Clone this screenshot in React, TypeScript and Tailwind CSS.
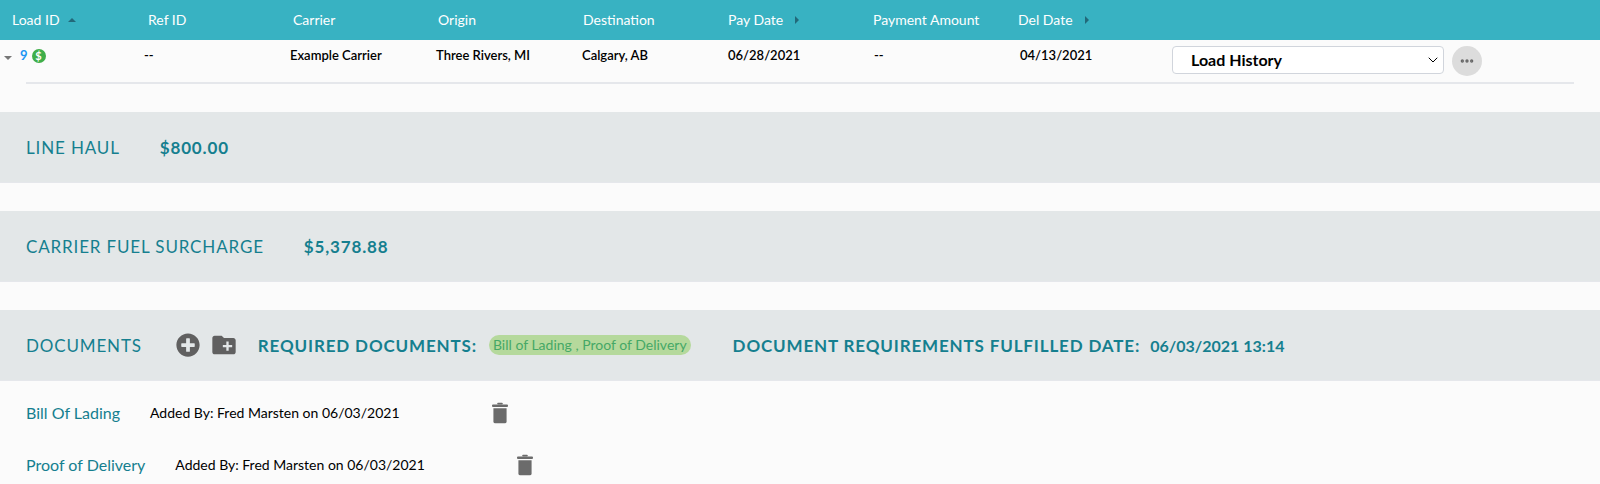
import { ChevronDown, Ellipsis } from "lucide-react";
import { FaPlusCircle } from "react-icons/fa";
import { MdCreateNewFolder } from "react-icons/md";

const headers = [
  { label: "Load ID", sort: "up" },
  { label: "Ref ID" },
  { label: "Carrier" },
  { label: "Origin" },
  { label: "Destination" },
  { label: "Pay Date", sort: "right" },
  { label: "Payment Amount" },
  { label: "Del Date", sort: "right" },
];

const cells = ["--", "Example Carrier", "Three Rivers, MI", "Calgary, AB", "06/28/2021", "--", "04/13/2021"];

function SortCaret({ dir }: { dir?: string }) {
  if (dir === "up") {
    return (
      <svg viewBox="0 0 8 4" className="ml-2 h-1 w-2 fill-[#22697a]">
        <polygon points="0,4 4,0 8,4" />
      </svg>
    );
  }
  if (dir === "right") {
    return (
      <svg viewBox="0 0 4 8" className="ml-3 h-2 w-1 fill-[#22697a]">
        <polygon points="0,0 4,4 0,8" />
      </svg>
    );
  }
  return null;
}

function Trash() {
  return (
    <svg viewBox="0 0 17 22" className="h-5.5 w-4 fill-[#6b6b6b]">
      <rect x="5.5" y="0" width="6" height="2" rx="1" />
      <rect x="0" y="2" width="17" height="2.5" rx="1" />
      <path d="M1.5 6h14v14a2 2 0 0 1-2 2h-10a2 2 0 0 1-2-2z" />
    </svg>
  );
}

function Band({ label, value }: { label: string; value: string }) {
  return (
    <div className="mt-7 box-content flex h-17.5 items-center gap-10 border-b border-gray-200 bg-[#e3e7e8] pl-6.5 text-[17px] tracking-wider text-[#157f8f]">
      <span className="pt-0.5">{label}</span>
      <span className="pt-0.5 font-bold">{value}</span>
    </div>
  );
}

function DocRow({ name }: { name: string }) {
  return (
    <div className="flex h-13 items-center pl-6.5">
      <a className="mr-7.5 text-base text-[#157f8f]">{name}</a>
      <span className="text-sm text-black">Added By: Fred Marsten on 06/03/2021</span>
      <span className="ml-23">
        <Trash />
      </span>
    </div>
  );
}

export default function App() {
  return (
    <div className="h-screen overflow-hidden bg-[#fbfbfb] font-['Lato',sans-serif]">
      {/* Table header */}
      <div className="grid h-10 grid-cols-[136px_repeat(7,145px)] items-center bg-[#38b2c2] pl-3 text-sm text-white">
        {headers.map((h) => (
          <div key={h.label} className="flex items-center">
            {h.label}
            <SortCaret dir={h.sort} />
          </div>
        ))}
      </div>

      {/* Load row */}
      <div className="mx-6.5 border-b-2 border-gray-200">
        <div className="-ml-6.5 grid h-10.5 grid-cols-[140px_repeat(7,146px)_1fr] items-start pl-1 text-[13px] font-semibold text-black">
          <div className="flex items-center pt-1.5">
            <svg viewBox="0 0 8 4" className="mt-1 h-1 w-2 fill-[#777]">
              <polygon points="0,0 8,0 4,4" />
            </svg>
            <span className="ml-2 font-bold text-[#2196f3]">9</span>
            <span className="ml-1 flex size-3.5 items-center justify-center rounded-full bg-[#3fae49] text-[11px] font-bold leading-none text-white">
              $
            </span>
          </div>
          {cells.map((c, i) => (
            <div key={i} className="pt-1.5">
              {c}
            </div>
          ))}
          <div className="flex items-start gap-2 pt-1.5 pl-1.5">
            <div className="flex h-7 w-68 shrink-0 items-center justify-between rounded border border-gray-300 bg-white pr-0.5 pl-4.5 text-base font-bold">
              Load History
              <ChevronDown className="size-4" strokeWidth={1.5} />
            </div>
            <div className="flex size-7.5 shrink-0 items-center justify-center rounded-full bg-[#dcdcdc]">
              <Ellipsis className="size-4 text-[#666]" strokeWidth={3} />
            </div>
          </div>
        </div>
      </div>

      <Band label="LINE HAUL" value="$800.00" />
      <Band label="CARRIER FUEL SURCHARGE" value="$5,378.88" />

      {/* Documents */}
      <div className="mt-7 box-content flex h-17.5 items-center border-b border-gray-200 bg-[#e3e7e8] pl-6.5 text-[17px] tracking-wider text-[#157f8f]">
        <span className="pt-0.5">DOCUMENTS</span>
        <FaPlusCircle className="ml-8.5 size-6 text-[#606060]" />
        <MdCreateNewFolder className="ml-2.5 size-7 text-[#606060]" />
        <span className="ml-5 pt-0.5 font-bold">REQUIRED DOCUMENTS:</span>
        <span className="ml-3 rounded-full bg-[#b5d99c] px-1 text-sm tracking-normal text-[#45a866]">
          Bill of Lading , Proof of Delivery
        </span>
        <span className="ml-10.5 pt-0.5 font-bold">DOCUMENT REQUIREMENTS FULFILLED DATE:</span>
        <span className="ml-2.5 pt-0.5 text-base font-bold tracking-normal">06/03/2021 13:14</span>
      </div>

      <div className="pt-1.5">
        <DocRow name="Bill Of Lading" />
        <DocRow name="Proof of Delivery" />
      </div>
    </div>
  );
}
